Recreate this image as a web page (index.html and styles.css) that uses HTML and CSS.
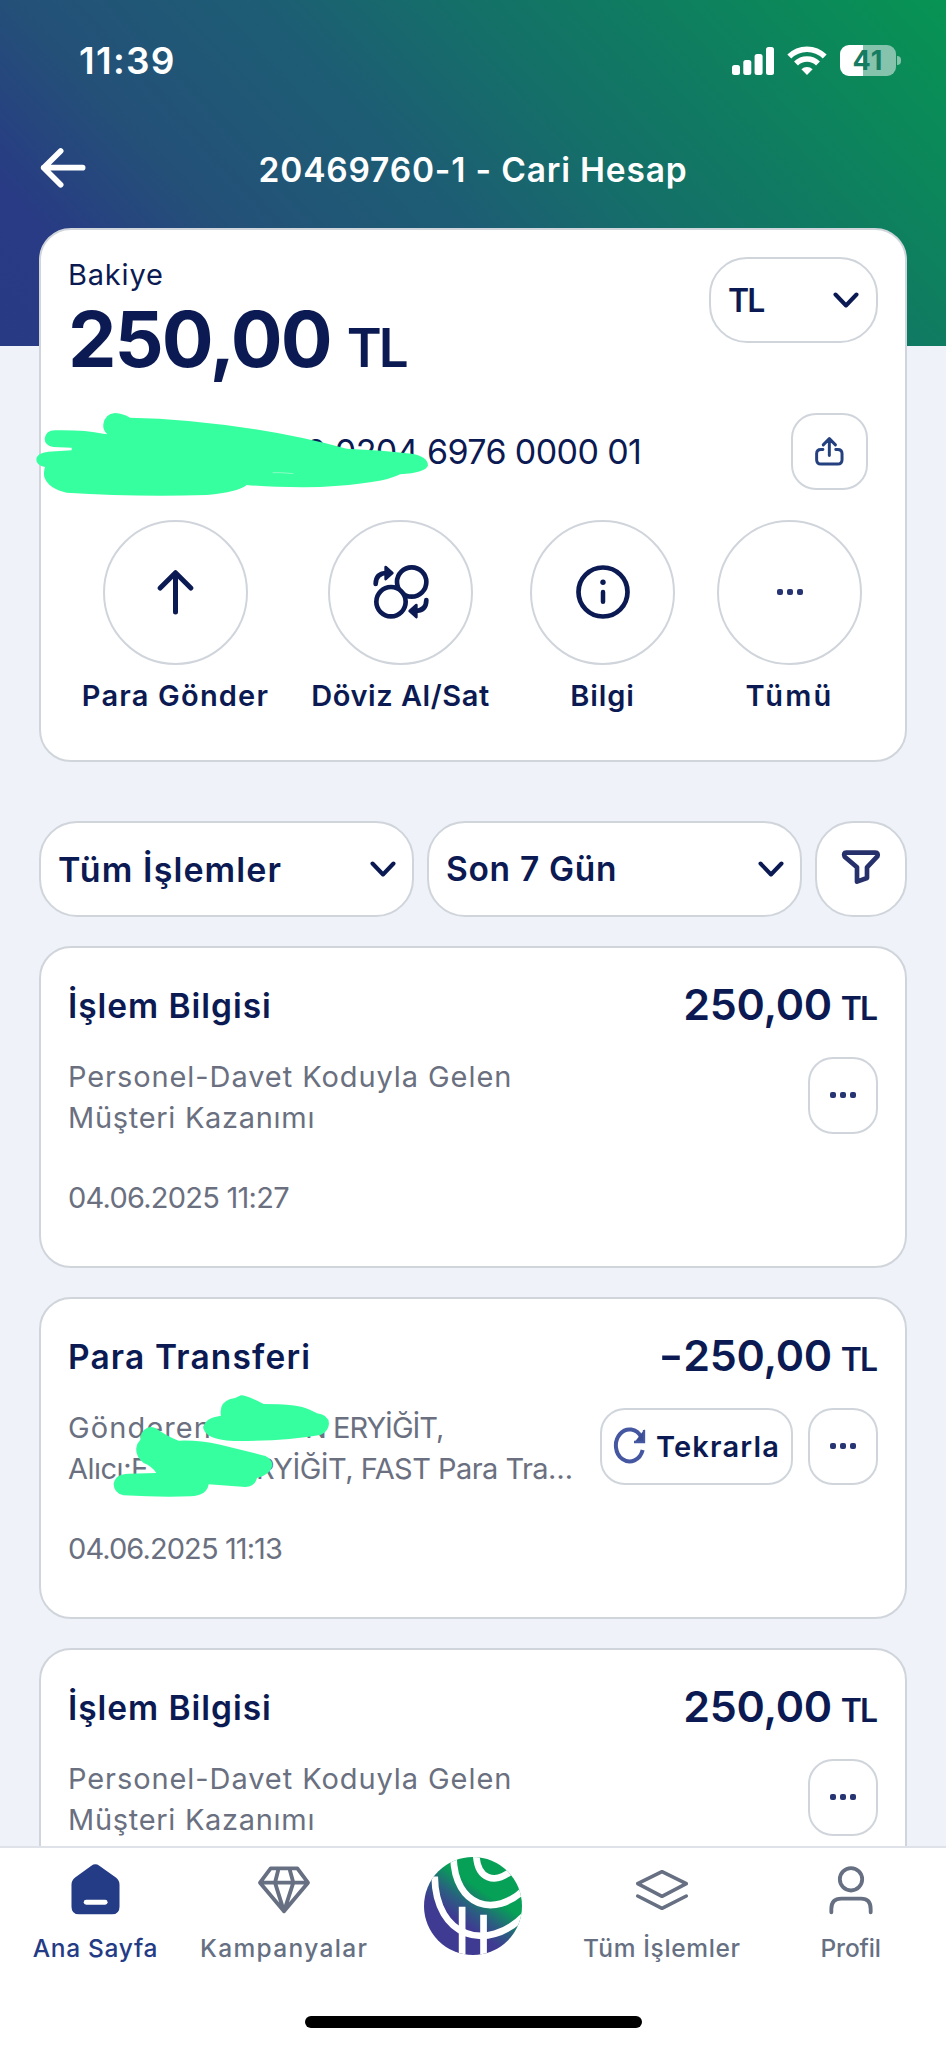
FILE: index.html
```
<!DOCTYPE html>
<html lang="tr">
<head>
<meta charset="utf-8">
<title>Cari Hesap</title>
<link rel="stylesheet" href="styles.css">
</head>
<body>
<svg class="defs" width="0" height="0" aria-hidden="true">
  <symbol id="chevron" viewBox="0 0 26 17"><path d="M2.5 2.5 13 13.5 23.500 2.500" fill="none" stroke="currentColor" stroke-width="4" stroke-linecap="round" stroke-linejoin="round"/></symbol>
  <symbol id="dots" viewBox="0 0 28 8"><g fill="currentColor"><rect x="1" y="1" width="6" height="6" rx="2"/><rect x="11" y="1" width="6" height="6" rx="2"/><rect x="21" y="1" width="6" height="6" rx="2"/></g></symbol>
</svg>
<div class="app">
  <header class="header">
    <div class="status">
      <span class="time">11:39</span>
      <div class="status-icons">
        <svg class="signal" viewBox="0 0 42 28" fill="#fff"><rect x="0" y="18" width="8" height="10" rx="2.500"/><rect x="11.300" y="13" width="8" height="15" rx="2.500"/><rect x="22.600" y="7" width="8" height="21" rx="2.500"/><rect x="34" y="0" width="8" height="28" rx="2.500"/></svg>
        <svg class="wifi" viewBox="0 0 40 30" fill="none" stroke="#fff" stroke-width="5.500"><path d="M2.300 10.500a25 25 0 0 1 35.400 0"/><path d="M9 17.500a15.600 15.600 0 0 1 22 0"/><path d="M20 29l-5.600-5.800a8 8 0 0 1 11.200 0z" fill="#fff" stroke="none"/></svg>
        <div class="battery"><span class="battery-text">41</span></div>
      </div>
    </div>
    <div class="titlebar">
      <svg class="back" viewBox="120 440 138 124" fill="none" stroke="#fff" stroke-width="17" stroke-linecap="round" stroke-linejoin="round"><path d="M131 502H248M182 452 131 502l51 51"/></svg>
      <h1 class="title">20469760-1 - Cari Hesap</h1>
    </div>
  </header>

  <main class="main">
    <section class="card account">
      <div class="account-top">
        <div>
          <div class="label">Bakiye</div>
          <div class="balance">250,00<span class="balance-unit">TL</span></div>
        </div>
        <div class="select currency"><span class="tl">TL</span><svg class="chevron"><use href="#chevron"/></svg></div>
      </div>
      <div class="iban-row">
        <span class="iban">0 0204 6976 0000 01</span>
        <div class="share"><svg viewBox="1023 258 94 94" fill="none" stroke="#24407f" stroke-width="9" stroke-linecap="round" stroke-linejoin="round"><path d="M1050 299h-6q-13 0-13 13v18q0 13 13 13h51q13 0 13-13v-18q0-13-13-13h-6M1069.500 317v-50M1051 285l18.500-19 18.500 19"/></svg></div>
      </div>
      <div class="actions">
        <div class="action">
          <div class="circle"><svg width="37" height="46" viewBox="472 656 110 138" fill="none" stroke="currentColor" stroke-width="15" stroke-linecap="round" stroke-linejoin="round"><path d="M527 785V668M481 713l46-46 46 46"/></svg></div>
          <span class="a1">Para Gönder</span>
        </div>
        <div class="action">
          <div class="circle"><svg width="56" height="56" viewBox="1119 643 168 168" fill="none" stroke="currentColor" stroke-width="14" stroke-linecap="round"><circle cx="1235" cy="697" r="44"/><circle cx="1173" cy="756" r="44" fill="#fff"/><path d="M1127 703q0-33 34-33M1279 751q0 33-34 33"/><path d="M1157 652l20 18-20 18zM1249 766l-20 18 20 18z" fill="currentColor" stroke-width="8" stroke-linejoin="round"/></svg></div>
          <span class="a2">Döviz Al/Sat</span>
        </div>
        <div class="action">
          <div class="circle"><svg width="54" height="54" viewBox="0 0 54 54" fill="none" stroke="currentColor"><circle cx="27" cy="27" r="24.500" stroke-width="4.700"/><circle cx="27" cy="17.300" r="2.700" fill="currentColor" stroke="none"/><path d="M27 27v9.700" stroke-width="4.500" stroke-linecap="round"/></svg></div>
          <span class="a3">Bilgi</span>
        </div>
        <div class="action">
          <div class="circle"><svg class="dots"><use href="#dots"/></svg></div>
          <span class="a4">Tümü</span>
        </div>
      </div>
      <svg class="scribble-iban" viewBox="105 185 1185 255"><path fill="#35ff9e" d="M345 188Q370 190 390 202 560 205 760 236 900 258 1040 295 1150 300 1235 310 1283 318 1284 345 1278 368 1200 372 1150 400 960 410 830 412 740 404 715 425 620 434 400 440 200 427 145 415 133 380 130 365 135 350 109 345 109 328 110 307 145 304L215 300V292L160 290Q134 285 134 265 138 240 165 240 250 238 310 250L322 252Q308 240 310 222 315 190 345 188Z"/><path d="M818 367q30-1 62 3" stroke="#b5fbd8" stroke-width="2" fill="none"/></svg>
    </section>

    <div class="filters">
      <div class="select"><span class="f1">Tüm İşlemler</span><svg class="chevron"><use href="#chevron"/></svg></div>
      <div class="select"><span class="f2">Son 7 Gün</span><svg class="chevron"><use href="#chevron"/></svg></div>
      <div class="select funnel"><svg width="40" height="36" viewBox="1104 151 120 108" fill="none" stroke="#26306b" stroke-width="14" stroke-linejoin="round"><path d="M1120 162H1207Q1217 162 1213 173L1182 206V238L1152 249V206L1115 174Q1110 162 1120 162Z"/></svg></div>
    </div>

    <section class="card tx">
      <div class="tx-head"><h2 class="t1">İşlem Bilgisi</h2><div class="amount">250,00<span class="unit">TL</span></div></div>
      <div class="tx-body">
        <div class="desc"><div class="d1">Personel-Davet Koduyla Gelen</div><div class="d2">Müşteri Kazanımı</div></div>
        <div class="buttons"><div class="btn more"><svg class="dots"><use href="#dots"/></svg></div></div>
      </div>
      <div class="date">04.06.2025 11:27</div>
    </section>

    <section class="card tx">
      <div class="tx-head"><h2 class="t2">Para Transferi</h2><div class="amount"><span class="sign">-</span>250,00<span class="unit">TL</span></div></div>
      <div class="tx-body">
        <div class="desc">
          <div class="line"><span class="from">Gönderen</span><span class="name">N ERYİĞİT,</span></div>
          <div class="line"><span class="to">Alıcı:E</span><span class="name2">ERYİĞİT, FAST Para Tra…</span></div>
        </div>
        <div class="buttons">
          <div class="btn repeat"><svg width="34" height="38" viewBox="422 443 102 114" fill="none" stroke="#4557a0" stroke-width="12"><path d="M507 474A41 48 0 1 0 511 512"/><path d="M517 450v40h-32z" fill="#3c4d96" stroke="none"/><path d="M515 452v36h-30" stroke-width="7"/></svg><span>Tekrarla</span></div>
          <div class="btn more"><svg class="dots"><use href="#dots"/></svg></div>
        </div>
      </div>
      <div class="date date2">04.06.2025 11:13</div>
      <svg class="scribble-names" viewBox="335 340 655 315" fill="#35ff9e"><path d="M610 440Q615 415 662 408 655 370 690 358 705 357 722 347 740 347 790 373 880 373 915 385 940 395 950 401 985 405 986 432 985 455 960 466 850 485 700 484 610 480 608 440Z"/><path d="M440 445Q455 435 480 455 510 475 535 483 590 480 660 495L780 525Q815 530 816 558 810 585 770 595 765 620 735 622L625 614Q620 648 570 650 480 653 370 647 340 640 340 612 345 582 385 582L468 580Q455 560 430 550 405 530 408 505 410 490 420 480 420 455 440 445Z"/></svg>
    </section>

    <section class="card tx">
      <div class="tx-head"><h2 class="t1">İşlem Bilgisi</h2><div class="amount">250,00<span class="unit">TL</span></div></div>
      <div class="tx-body">
        <div class="desc"><div class="d1">Personel-Davet Koduyla Gelen</div><div class="d2">Müşteri Kazanımı</div></div>
        <div class="buttons"><div class="btn more"><svg class="dots"><use href="#dots"/></svg></div></div>
      </div>
    </section>
  </main>

  <nav class="nav">
    <div class="tabs">
      <div class="tab active">
        <div class="tab-icon"><svg width="49" height="51" viewBox="208 551 147 154"><path fill="#243b85" d="M209 614Q209 600 220 592L269 556Q281 548 293 556L343 592Q354 600 354 614V680Q354 703 331 703H232Q209 703 209 680Z"/><rect x="246" y="659" width="72" height="15" rx="7.500" fill="#fff"/></svg></div>
        <span class="n1">Ana Sayfa</span>
      </div>
      <div class="tab">
        <div class="tab-icon"><svg width="54" height="50" viewBox="768 555 162 150" fill="none" stroke="currentColor" stroke-width="11.500" stroke-linejoin="round"><path d="M809 565H889L921 608 849 694 777 608ZM777 608H921M833 565 822 608 849 694 877 608 865 565"/></svg></div>
        <span class="n2">Kampanyalar</span>
      </div>
      <div class="tab center">
        <svg class="logo" viewBox="72 49.500 293 293">
          <defs>
            <linearGradient id="lg" gradientUnits="userSpaceOnUse" x1="168" y1="232" x2="232" y2="140"><stop offset="0" stop-color="#3f3b92"/><stop offset=".45" stop-color="#2a5f80"/><stop offset="1" stop-color="#06a056"/></linearGradient>
            <clipPath id="lc"><circle cx="218.500" cy="196" r="146.500"/></clipPath>
          </defs>
          <g clip-path="url(#lc)">
            <rect x="72" y="49" width="294" height="294" fill="url(#lg)"/>
            <g fill="none" stroke="#fff" stroke-width="20">
              <path d="M228 40C230 118 285 130 332 92"/>
              <path d="M160 50C164 200 285 232 372 146"/>
              <path d="M104 108C106 292 262 336 372 224"/>
              <path d="M186 198V350M250 222V350"/>
            </g>
          </g>
        </svg>
      </div>
      <div class="tab">
        <div class="tab-icon"><svg width="54" height="42" viewBox="484 567 162 126" fill="none" stroke="currentColor" stroke-width="10.500" stroke-linecap="round" stroke-linejoin="round"><path d="M492 611 565 575 638 611 565 649ZM492 648 565 685 638 648"/></svg></div>
        <span class="n4">Tüm İşlemler</span>
      </div>
      <div class="tab">
        <div class="tab-icon"><svg width="44" height="50" viewBox="1066 555 132 150" fill="none" stroke="currentColor" stroke-width="11.500" stroke-linecap="round"><circle cx="1132" cy="598" r="33.500"/><path d="M1073 697V687Q1073 656 1103 656H1162Q1191 656 1191 687V697"/></svg></div>
        <span class="n5">Profil</span>
      </div>
    </div>
    <div class="home-indicator"></div>
  </nav>
</div>
</body>
</html>
```
FILE: styles.css
```
* { box-sizing: border-box; }

body { margin: 0; }

.defs { display: block; }

h1, h2 { margin: 0; font-weight: 600; }

.app {
  width: 946px;
  height: 2048px;
  display: flex;
  flex-direction: column;
  overflow: hidden;
  font-family: "Inter", "Liberation Sans", sans-serif;
  color: #0b1a52;
  white-space: nowrap;
  background:
    linear-gradient(47deg, #283a84 0%, #283b84 12%, #245078 26%, #1d5d74 46%, #147068 62%, #0f7d60 76%, #079453 100%) 0 0 / 100% 346px no-repeat,
    #eff2f8;
}

/* Header */
.header { height: 228px; flex: none; color: #fff; }

.status {
  height: 121px;
  display: flex;
  align-items: center;
  justify-content: space-between;
  padding: 0 45px 0 79px;
}

.time { font-size: 37px; line-height: 48px; font-weight: 600; letter-spacing: 1.3px; }

.status-icons { display: flex; align-items: center; }
.signal { width: 42px; height: 28px; margin-right: 13px; }
.wifi { width: 40px; height: 30px; margin-right: 13px; }

.battery {
  position: relative;
  width: 56px;
  height: 31px;
  margin-right: 5px;
  border-radius: 9px;
  background: linear-gradient(90deg, #fff 23px, #86c3ac 23px);
  text-align: center;
}

.battery::after {
  content: "";
  position: absolute;
  left: 57px;
  top: 11px;
  width: 4px;
  height: 9px;
  border-radius: 0 5px 5px 0;
  background: #86c3ac;
}

.battery-text { display: block; font-size: 27px; line-height: 32px; font-weight: 700; letter-spacing: 1px; color: #157c62; }

.titlebar { height: 98px; position: relative; display: flex; align-items: center; justify-content: center; }
.back { position: absolute; left: 40px; top: 25.500px; width: 46px; height: 41.300px; }
.title { font-size: 33.500px; line-height: 40px; letter-spacing: .82px; }

/* Main */
.main { flex: 1; min-height: 0; overflow: hidden; padding: 0 39px; }

.card {
  position: relative;
  border: 2px solid #d0d5dc;
  border-radius: 32px;
  background: #fff;
}

.account { height: 534px; padding: 25px 27px 0 27px; }
.account-top { display: flex; justify-content: space-between; height: 158px; }
.label { font-size: 29px; line-height: 40px; letter-spacing: .8px; }
.balance { font-size: 77px; line-height: 88px; font-weight: 700; letter-spacing: -2px; }
.balance-unit { font-size: 53px; font-weight: 600; letter-spacing: -3px; margin-left: 16px; }

.select {
  display: flex;
  align-items: center;
  justify-content: space-between;
  border: 2px solid #d0d5dc;
  border-radius: 38px;
  background: #fff;
  padding: 0 17px;
  font-size: 33px;
  font-weight: 600;
}

.chevron { width: 26px; height: 17px; }
.currency { width: 169px; height: 86px; margin-top: 2px; }
.tl { letter-spacing: -2px; font-weight: 600; font-size: 32px; }

.iban-row { display: flex; align-items: center; justify-content: space-between; height: 77px; padding: 0 10px 0 237px; }
.iban { font-size: 34px; letter-spacing: -.6px; }

.share, .btn { border: 2px solid #d0d5dc; border-radius: 25px; height: 77px; display: flex; align-items: center; justify-content: center; background: #fff; }
.share { width: 77px; }
.share svg { width: 31px; height: 31px; }

.actions { display: grid; grid-template-columns: 225px 225px 179px 195px; margin: 29.500px 0 0 -5px; }
.action { display: flex; flex-direction: column; align-items: center; font-size: 29px; line-height: 34px; font-weight: 600; }
.circle { width: 145px; height: 145px; margin-bottom: 14px; border: 2px solid #d0d5dc; border-radius: 50%; display: flex; align-items: center; justify-content: center; }
.a1 { letter-spacing: 1.200px; }
.a2 { letter-spacing: .55px; }
.a3 { letter-spacing: .9px; }
.a4 { letter-spacing: 2.200px; }

.dots { width: 28px; height: 8px; color: #273572; }

.scribble-iban { position: absolute; left: -6px; top: 181.700px; width: 395px; height: 85px; }

/* Filters */
.filters { display: grid; grid-template-columns: 375px 375px 92px; gap: 13px; height: 96px; margin-top: 59px; }
.filters .chevron { margin-right: -1px; }
.funnel { justify-content: center; padding: 0 0 5px; }
.f1 { font-size: 34px; letter-spacing: 1.100px; }
.f2 { font-size: 33.500px; letter-spacing: .7px; }

/* Transactions */
.tx { height: 322px; margin-top: 29px; padding: 36px 27px 0 27px; }
.tx-head { height: 44px; display: flex; align-items: center; justify-content: space-between; line-height: 44px; font-weight: 600; }
.tx-head h2 { font-size: 33.500px; }
.t1 { letter-spacing: .95px; }
.t2 { letter-spacing: 1.150px; }
.amount { font-size: 43px; letter-spacing: -.3px; }
.sign { display: inline-block; transform: scaleX(1.25); margin-right: 3px; }
.unit { font-size: 32px; letter-spacing: -2px; margin-left: 9px; margin-right: 2px; }

.tx-body { display: flex; justify-content: space-between; margin-top: 27.500px; height: 82px; }
.desc, .date { font-size: 29px; line-height: 41px; color: #6a7080; }
.d1 { letter-spacing: .92px; }
.d2 { letter-spacing: .7px; }
.date { letter-spacing: -.75px; margin-top: 39.500px; }
.date2 { letter-spacing: -.9px; }
.line { display: flex; }
.from { width: 237px; letter-spacing: 1.100px; }
.to { width: 171px; letter-spacing: -.5px; }
.name { letter-spacing: -1px; }
.name2 { letter-spacing: -.54px; }

.buttons { display: flex; gap: 15px; margin-top: 1px; position: relative; }
.more { width: 70px; }
.repeat { width: 193px; gap: 9px; font-size: 29px; font-weight: 600; letter-spacing: 1.200px; }

.scribble-names { position: absolute; left: 70.700px; top: 94.300px; width: 218.300px; height: 105px; }

/* Bottom navigation */
.nav { flex: none; height: 202px; background: #fff; border-top: 2px solid #dfe2e8; display: flex; flex-direction: column; align-items: center; justify-content: space-between; padding-bottom: 20px; }
.tabs { width: 944px; display: grid; grid-template-columns: repeat(5, 1fr); }
.tab { display: flex; flex-direction: column; align-items: center; padding-top: 8px; font-size: 24.500px; line-height: 30px; font-weight: 500; color: #667082; }
.tab-icon { height: 67px; margin-bottom: 10px; display: flex; align-items: center; }
.active { color: #243b85; }
.logo { width: 98px; height: 98px; margin-top: 1px; }
.n1 { letter-spacing: .7px; }
.n2 { letter-spacing: 1.350px; }
.n4 { letter-spacing: .65px; }
.n5 { letter-spacing: -.2px; }
.home-indicator { width: 337px; height: 12px; border-radius: 6px; background: #000; }
```
